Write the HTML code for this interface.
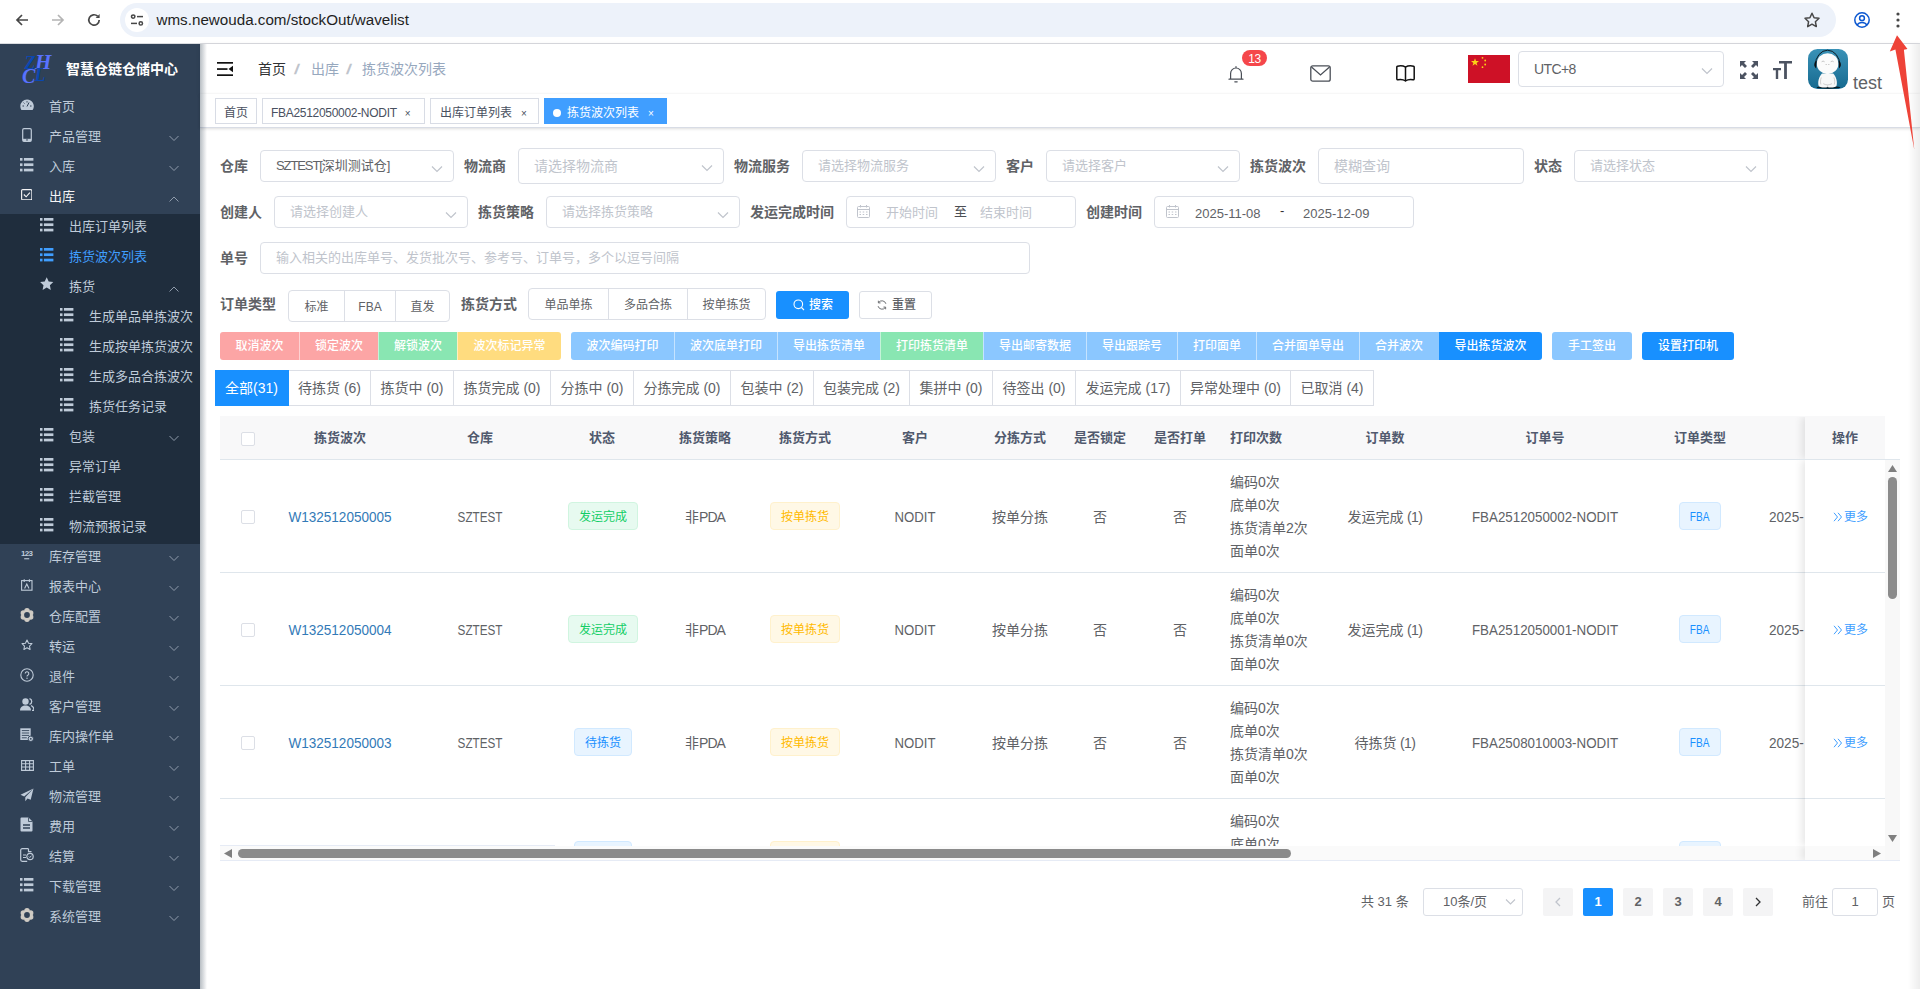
<!DOCTYPE html><html lang="zh-CN"><head><meta charset="utf-8"><title>拣货波次列表</title><style>
*{box-sizing:border-box;margin:0;padding:0}
html,body{width:1920px;height:989px;overflow:hidden;background:#fff}
body{font-family:"Liberation Sans","Noto Sans CJK SC",sans-serif;font-size:14px;color:#606266;position:relative}
.abs{position:absolute}
svg{display:block}
/* chrome */
#chrome{position:absolute;left:0;top:0;width:1920px;height:44px;background:#fff;border-bottom:1px solid #dadce0}
#pill{position:absolute;left:120px;top:3px;width:1716px;height:34px;border-radius:17px;background:#edf2fa}
#url{position:absolute;left:156.5px;top:10px;font-size:15.2px;color:#1f1f1f;letter-spacing:0px;line-height:20px;white-space:nowrap}
/* sidebar */
#side{position:absolute;left:0;top:44px;width:200px;height:945px;background:#304156;overflow:hidden}
#sub{position:absolute;left:0;top:170px;width:200px;height:330px;background:#1f2d3d}
.mi{position:absolute;left:0;width:200px;height:30px;line-height:30px;font-size:13px;color:#bfcbd9;white-space:nowrap}
.mi .t{position:absolute;top:0}
.mi svg{position:absolute}
.mi.act{color:#409eff}
.mi.open{color:#f4f4f5}
#title{position:absolute;left:66px;top:14px;font-size:14px;font-weight:bold;color:#fff;line-height:22px;white-space:nowrap}
/* navbar */
#nav{position:absolute;left:200px;top:44px;width:1720px;height:50px;background:#fff;box-shadow:0 1px 4px rgba(0,21,41,.13)}
.bc{position:absolute;top:15px;line-height:20px;font-size:14px;white-space:nowrap}
#tags{position:absolute;left:200px;top:94px;width:1720px;height:34px;background:#fff;border-bottom:1px solid #d8dce5;box-shadow:0 1px 3px 0 rgba(0,0,0,.12),0 0 3px 0 rgba(0,0,0,.04)}
.tag{position:absolute;top:4px;height:26px;line-height:28px;border:1px solid #d8dce5;color:#495060;background:#fff;font-size:12px;white-space:nowrap;padding:0 8px}
.tag.on{background:#409eff;border-color:#409eff;color:#fff}
.tag .x{display:inline-block;font-size:10px;margin-left:6px;transform:translateY(-0.5px)}
/* form */
.lb{position:absolute;font-size:14px;font-weight:bold;color:#606266;line-height:20px;white-space:nowrap}
.inp{position:absolute;border:1px solid #dcdfe6;border-radius:4px;background:#fff;font-size:13px;color:#606266;white-space:nowrap}
.inp .ph{position:absolute;left:15px;color:#c0c4cc}
.inp .v{position:absolute;left:15px;color:#606266}
.inp svg.arr{position:absolute}
.rg{position:absolute;border:1px solid #dcdfe6;border-radius:4px;font-size:12px;color:#606266;background:#fff}
.rg span{position:absolute;top:0;text-align:center;height:100%;border-left:1px solid #dcdfe6}
.rg span:first-child{border-left:0}
.btn{position:absolute;height:28px;line-height:28px;font-size:12px;font-weight:500;color:#fff;text-align:center;white-space:nowrap}
.tab{position:absolute;top:370px;height:36px;line-height:34px;font-size:14px;color:#606266;text-align:center;border:1px solid #dcdfe6;border-left:0;white-space:nowrap;background:#fff}
/* table */
.th{position:absolute;top:417px;height:42px;line-height:42px;font-size:13px;font-weight:bold;color:#515a6e;white-space:nowrap;transform:translateX(-50%)}
.td{position:absolute;font-size:14px;color:#606266;line-height:23px;white-space:nowrap;transform:translate(-50%,-50%)}
.tdl{position:absolute;font-size:14px;color:#606266;line-height:23px;white-space:nowrap}
.cb{position:absolute;width:14px;height:14px;border:1px solid #dcdfe6;border-radius:2px;background:#fff}
.tg{position:absolute;height:28px;line-height:28px;font-size:12px;border:1px solid;border-radius:4px;text-align:center;white-space:nowrap;transform:translate(-50%,-50%)}
.tg.g{color:#13ce66;background:#e7faf0;border-color:#d0f5e0}
.tg.y{color:#ffba00;background:#fff8e6;border-color:#fff1cc}
.tg.b{color:#1890ff;background:#e8f4ff;border-color:#d1e9ff}
.pg{position:absolute;top:888px;height:28px;line-height:28px;width:30px;text-align:center;background:#f4f4f5;border-radius:2px;font-size:13px;font-weight:bold;color:#606266}
</style></head><body><div id="chrome"><div id="pill"></div><svg class="abs" style="left:14px;top:12px" width="16" height="16" viewBox="0 0 16 16"><path d="M14 8H3M8 3L3 8l5 5" fill="none" stroke="#474747" stroke-width="1.7"/></svg><svg class="abs" style="left:50px;top:12px" width="16" height="16" viewBox="0 0 16 16"><path d="M2 8h11M8 3l5 5-5 5" fill="none" stroke="#b4b4b4" stroke-width="1.7"/></svg><svg class="abs" style="left:86px;top:12px" width="16" height="16" viewBox="0 0 16 16"><path d="M13.2 8A5.2 5.2 0 1 1 11.6 4.2" fill="none" stroke="#474747" stroke-width="1.7"/><path d="M13.6 2v4h-4z" fill="#474747"/></svg><div class="abs" style="left:125px;top:8px;width:24px;height:24px;border-radius:12px;background:#fff"></div><svg class="abs" style="left:130px;top:13px" width="14" height="14" viewBox="0 0 14 14"><g fill="none" stroke="#474747" stroke-width="1.5"><circle cx="3.2" cy="3.6" r="1.7"/><path d="M7 3.6h6"/><circle cx="10.8" cy="10.4" r="1.7"/><path d="M1 10.4h6"/></g></svg><div id="url">wms.newouda.com/stockOut/wavelist</div><svg class="abs" style="left:1803px;top:11px" width="18" height="18" viewBox="0 0 18 18"><path d="M9 2.2l2.1 4.5 4.9.6-3.6 3.4.9 4.9L9 13.2l-4.3 2.4.9-4.9L2 7.3l4.9-.6z" fill="none" stroke="#474747" stroke-width="1.5" stroke-linejoin="round"/></svg><svg class="abs" style="left:1853px;top:11px" width="18" height="18" viewBox="0 0 18 18"><g fill="none" stroke="#0b57d0" stroke-width="1.5"><circle cx="9" cy="9" r="7.2"/><circle cx="9" cy="7.2" r="2.4"/><path d="M4 14c1.2-1.8 3-2.6 5-2.6s3.800.8 5 2.600"/></g></svg><svg class="abs" style="left:1893.800px;top:11px" width="8" height="18" viewBox="0 0 8 18"><g fill="#474747"><circle cx="4" cy="3" r="1.6"/><circle cx="4" cy="9" r="1.6"/><circle cx="4" cy="15" r="1.6"/></g></svg></div><div id="side"><div id="sub"></div><svg class="abs" style="left:20px;top:8px" width="36" height="34" viewBox="0 0 36 34"><g font-family="Liberation Serif,serif" font-style="italic" font-weight="bold"><text x="4.500" y="16.800" font-size="18" fill="#0c47b0">Z</text><text x="15" y="17" font-size="21" fill="#5872ff">H</text><text x="2" y="31" font-size="20" fill="#5872ff">C</text><text x="14.500" y="29" font-size="18" fill="#0c47b0">L</text></g></svg><div id="title">智慧仓链仓储中心</div><div class="mi" style="top:48px"><svg style="left:20px;top:7px" width="14" height="12" viewBox="0 0 14 12"><path d="M7 .5A6.8 6.8 0 0 0 .3 7.300c0 1.400.4 2.700 1.100 3.800h11.200A6.800 6.800 0 0 0 7 .5z" fill="#bfcbd9"/><g stroke="#304156" stroke-width="1"><path d="M7 7.500l2-4M2.500 7h1.500M10 7h1.500M7 2.200v1.300M3.600 3.600l.9.900"/></g></svg><span class="t" style="left:49px">首页</span></div><div class="mi" style="top:78px"><svg style="left:21.500px;top:5.500px" width="10" height="14" viewBox="0 0 10 14"><rect x=".7" y=".7" width="8.600" height="12.600" rx="1.300" fill="none" stroke="#bfcbd9" stroke-width="1.200"/><rect x="1" y="10.800" width="8" height="2.300" fill="#bfcbd9"/><rect x="4" y="11.500" width="2" height=".9" fill="#304156"/></svg><span class="t" style="left:49px">产品管理</span><svg style="left:169px;top:12.5px" width="10" height="7" viewBox="0 0 10 7"><path d="M.5 1l4.500 4.500L9.500 1" fill="none" stroke="#8f9bab" stroke-width="1"/></svg></div><div class="mi" style="top:108px"><svg style="left:20px;top:6px" width="14" height="14" viewBox="0 0 14 14"><g fill="#bfcbd9"><rect x="0" y="0" width="2.500" height="2.700"/><rect x="3.900" y="0" width="9.500" height="2.700"/><rect x="0" y="5.350" width="2.500" height="2.700"/><rect x="3.900" y="5.350" width="9.500" height="2.700"/><rect x="0" y="10.700" width="2.500" height="2.700"/><rect x="3.900" y="10.700" width="9.500" height="2.700"/></g></svg><span class="t" style="left:49px">入库</span><svg style="left:169px;top:12.5px" width="10" height="7" viewBox="0 0 10 7"><path d="M.5 1l4.500 4.500L9.500 1" fill="none" stroke="#8f9bab" stroke-width="1"/></svg></div><div class="mi open" style="top:138px"><svg style="left:20.600px;top:6.800px" width="11.500" height="11.500" viewBox="0 0 13 13"><rect x=".7" y=".7" width="11.600" height="11.600" rx="1.200" fill="none" stroke="#f4f4f5" stroke-width="1.300"/><path d="M3.200 6.200l2.600 2.600 4.200-4.600" fill="none" stroke="#f4f4f5" stroke-width="1.300"/></svg><span class="t" style="left:49px">出库</span><svg style="left:169px;top:13.5px" width="10" height="7" viewBox="0 0 10 7"><path d="M.5 5.500l4.500-4.500 4.500 4.500" fill="none" stroke="#8f9bab" stroke-width="1"/></svg></div><div class="mi" style="top:168px"><svg style="left:40px;top:6px" width="14" height="14" viewBox="0 0 14 14"><g fill="#bfcbd9"><rect x="0" y="0" width="2.500" height="2.700"/><rect x="3.900" y="0" width="9.500" height="2.700"/><rect x="0" y="5.350" width="2.500" height="2.700"/><rect x="3.900" y="5.350" width="9.500" height="2.700"/><rect x="0" y="10.700" width="2.500" height="2.700"/><rect x="3.900" y="10.700" width="9.500" height="2.700"/></g></svg><span class="t" style="left:69px">出库订单列表</span></div><div class="mi act" style="top:198px"><svg style="left:40px;top:6px" width="14" height="14" viewBox="0 0 14 14"><g fill="#409eff"><rect x="0" y="0" width="2.500" height="2.700"/><rect x="3.900" y="0" width="9.500" height="2.700"/><rect x="0" y="5.350" width="2.500" height="2.700"/><rect x="3.900" y="5.350" width="9.500" height="2.700"/><rect x="0" y="10.700" width="2.500" height="2.700"/><rect x="3.900" y="10.700" width="9.500" height="2.700"/></g></svg><span class="t" style="left:69px">拣货波次列表</span></div><div class="mi" style="top:228px"><svg style="left:40px;top:5px" width="14" height="14" viewBox="0 0 14 14"><path d="M6.700 .3l2 4.200 4.600.6-3.400 3.200.9 4.600-4.100-2.300-4.100 2.300.9-4.600L.1 5.100l4.600-.6z" fill="#bfcbd9"/></svg><span class="t" style="left:69px">拣货</span><svg style="left:169px;top:13.5px" width="10" height="7" viewBox="0 0 10 7"><path d="M.5 5.500l4.500-4.500 4.500 4.500" fill="none" stroke="#8f9bab" stroke-width="1"/></svg></div><div class="mi" style="top:258px"><svg style="left:60px;top:6px" width="14" height="14" viewBox="0 0 14 14"><g fill="#bfcbd9"><rect x="0" y="0" width="2.500" height="2.700"/><rect x="3.900" y="0" width="9.500" height="2.700"/><rect x="0" y="5.350" width="2.500" height="2.700"/><rect x="3.900" y="5.350" width="9.500" height="2.700"/><rect x="0" y="10.700" width="2.500" height="2.700"/><rect x="3.900" y="10.700" width="9.500" height="2.700"/></g></svg><span class="t" style="left:89px">生成单品单拣波次</span></div><div class="mi" style="top:288px"><svg style="left:60px;top:6px" width="14" height="14" viewBox="0 0 14 14"><g fill="#bfcbd9"><rect x="0" y="0" width="2.500" height="2.700"/><rect x="3.900" y="0" width="9.500" height="2.700"/><rect x="0" y="5.350" width="2.500" height="2.700"/><rect x="3.900" y="5.350" width="9.500" height="2.700"/><rect x="0" y="10.700" width="2.500" height="2.700"/><rect x="3.900" y="10.700" width="9.500" height="2.700"/></g></svg><span class="t" style="left:89px">生成按单拣货波次</span></div><div class="mi" style="top:318px"><svg style="left:60px;top:6px" width="14" height="14" viewBox="0 0 14 14"><g fill="#bfcbd9"><rect x="0" y="0" width="2.500" height="2.700"/><rect x="3.900" y="0" width="9.500" height="2.700"/><rect x="0" y="5.350" width="2.500" height="2.700"/><rect x="3.900" y="5.350" width="9.500" height="2.700"/><rect x="0" y="10.700" width="2.500" height="2.700"/><rect x="3.900" y="10.700" width="9.500" height="2.700"/></g></svg><span class="t" style="left:89px">生成多品合拣波次</span></div><div class="mi" style="top:348px"><svg style="left:60px;top:6px" width="14" height="14" viewBox="0 0 14 14"><g fill="#bfcbd9"><rect x="0" y="0" width="2.500" height="2.700"/><rect x="3.900" y="0" width="9.500" height="2.700"/><rect x="0" y="5.350" width="2.500" height="2.700"/><rect x="3.900" y="5.350" width="9.500" height="2.700"/><rect x="0" y="10.700" width="2.500" height="2.700"/><rect x="3.900" y="10.700" width="9.500" height="2.700"/></g></svg><span class="t" style="left:89px">拣货任务记录</span></div><div class="mi" style="top:378px"><svg style="left:40px;top:6px" width="14" height="14" viewBox="0 0 14 14"><g fill="#bfcbd9"><rect x="0" y="0" width="2.500" height="2.700"/><rect x="3.900" y="0" width="9.500" height="2.700"/><rect x="0" y="5.350" width="2.500" height="2.700"/><rect x="3.900" y="5.350" width="9.500" height="2.700"/><rect x="0" y="10.700" width="2.500" height="2.700"/><rect x="3.900" y="10.700" width="9.500" height="2.700"/></g></svg><span class="t" style="left:69px">包装</span><svg style="left:169px;top:12.5px" width="10" height="7" viewBox="0 0 10 7"><path d="M.5 1l4.500 4.500L9.500 1" fill="none" stroke="#8f9bab" stroke-width="1"/></svg></div><div class="mi" style="top:408px"><svg style="left:40px;top:6px" width="14" height="14" viewBox="0 0 14 14"><g fill="#bfcbd9"><rect x="0" y="0" width="2.500" height="2.700"/><rect x="3.900" y="0" width="9.500" height="2.700"/><rect x="0" y="5.350" width="2.500" height="2.700"/><rect x="3.900" y="5.350" width="9.500" height="2.700"/><rect x="0" y="10.700" width="2.500" height="2.700"/><rect x="3.900" y="10.700" width="9.500" height="2.700"/></g></svg><span class="t" style="left:69px">异常订单</span></div><div class="mi" style="top:438px"><svg style="left:40px;top:6px" width="14" height="14" viewBox="0 0 14 14"><g fill="#bfcbd9"><rect x="0" y="0" width="2.500" height="2.700"/><rect x="3.900" y="0" width="9.500" height="2.700"/><rect x="0" y="5.350" width="2.500" height="2.700"/><rect x="3.900" y="5.350" width="9.500" height="2.700"/><rect x="0" y="10.700" width="2.500" height="2.700"/><rect x="3.900" y="10.700" width="9.500" height="2.700"/></g></svg><span class="t" style="left:69px">拦截管理</span></div><div class="mi" style="top:468px"><svg style="left:40px;top:6px" width="14" height="14" viewBox="0 0 14 14"><g fill="#bfcbd9"><rect x="0" y="0" width="2.500" height="2.700"/><rect x="3.900" y="0" width="9.500" height="2.700"/><rect x="0" y="5.350" width="2.500" height="2.700"/><rect x="3.900" y="5.350" width="9.500" height="2.700"/><rect x="0" y="10.700" width="2.500" height="2.700"/><rect x="3.900" y="10.700" width="9.500" height="2.700"/></g></svg><span class="t" style="left:69px">物流预报记录</span></div><div class="mi" style="top:498px"><svg style="left:20.500px;top:6px" width="13" height="13" viewBox="0 0 13 13"><text x="0" y="8" font-size="8" font-weight="bold" fill="#bfcbd9" font-family="Liberation Sans,sans-serif" letter-spacing="-0.700">123</text><path d="M3.200 10.200h5v1.100h-5z" fill="#bfcbd9"/></svg><span class="t" style="left:49px">库存管理</span><svg style="left:169px;top:12.5px" width="10" height="7" viewBox="0 0 10 7"><path d="M.5 1l4.500 4.500L9.500 1" fill="none" stroke="#8f9bab" stroke-width="1"/></svg></div><div class="mi" style="top:528px"><svg style="left:20.500px;top:6.500px" width="12" height="12" viewBox="0 0 12 12"><rect x=".6" y="1.600" width="10.400" height="9.600" fill="none" stroke="#bfcbd9" stroke-width="1.100"/><path d="M3.200 .2v2.800M8.400 .2v2.800M3.600 9.500l2.200-4.500 2.200 4.500" fill="none" stroke="#bfcbd9" stroke-width="1.100"/></svg><span class="t" style="left:49px">报表中心</span><svg style="left:169px;top:12.5px" width="10" height="7" viewBox="0 0 10 7"><path d="M.5 1l4.500 4.500L9.500 1" fill="none" stroke="#8f9bab" stroke-width="1"/></svg></div><div class="mi" style="top:558px"><svg style="left:20px;top:6px" width="14" height="14" viewBox="0 0 14 14"><g fill="#cfcbc4"><circle cx="7" cy="2.800" r="2.750"/><circle cx="10.650" cy="4.900" r="2.750"/><circle cx="10.650" cy="9.100" r="2.750"/><circle cx="7" cy="11.200" r="2.750"/><circle cx="3.350" cy="9.100" r="2.750"/><circle cx="3.350" cy="4.900" r="2.750"/><circle cx="7" cy="7" r="4"/></g><circle cx="7" cy="7" r="2.900" fill="#304156"/></svg><span class="t" style="left:49px">仓库配置</span><svg style="left:169px;top:12.5px" width="10" height="7" viewBox="0 0 10 7"><path d="M.5 1l4.500 4.500L9.500 1" fill="none" stroke="#8f9bab" stroke-width="1"/></svg></div><div class="mi" style="top:588px"><svg style="left:20.500px;top:7px" width="12" height="12" viewBox="0 0 14 14"><path d="M7 1.200l1.800 3.700 4 .5-2.900 2.800.7 4L7 10.300l-3.600 1.900.7-4L1.200 5.400l4-.5z" fill="none" stroke="#bfcbd9" stroke-width="1.250" stroke-linejoin="round"/></svg><span class="t" style="left:49px">转运</span><svg style="left:169px;top:12.5px" width="10" height="7" viewBox="0 0 10 7"><path d="M.5 1l4.500 4.500L9.500 1" fill="none" stroke="#8f9bab" stroke-width="1"/></svg></div><div class="mi" style="top:618px"><svg style="left:19.5px;top:5.8px" width="14" height="14" viewBox="0 0 14 14"><circle cx="7" cy="7" r="6.200" fill="none" stroke="#bfcbd9" stroke-width="1.100"/><path d="M5.200 5.600a1.800 1.800 0 1 1 2.600 1.600c-.6.300-.8.700-.8 1.300" fill="none" stroke="#bfcbd9" stroke-width="1.100"/><circle cx="7" cy="10.300" r=".7" fill="#bfcbd9"/></svg><span class="t" style="left:49px">退件</span><svg style="left:169px;top:12.5px" width="10" height="7" viewBox="0 0 10 7"><path d="M.5 1l4.500 4.500L9.500 1" fill="none" stroke="#8f9bab" stroke-width="1"/></svg></div><div class="mi" style="top:648px"><svg style="left:19.5px;top:5.5px" width="14" height="13" viewBox="0 0 14 13"><circle cx="5.500" cy="3.500" r="3.200" fill="#bfcbd9"/><path d="M0 12.500c0-3.500 2.500-5 5.500-5s5.500 1.500 5.500 5z" fill="#bfcbd9"/><path d="M9.500 .6a3 3 0 0 1 0 5.800M11 7.600c1.800.6 3 2 3 4.900h-2" fill="none" stroke="#bfcbd9" stroke-width="1.300"/></svg><span class="t" style="left:49px">客户管理</span><svg style="left:169px;top:12.5px" width="10" height="7" viewBox="0 0 10 7"><path d="M.5 1l4.500 4.500L9.500 1" fill="none" stroke="#8f9bab" stroke-width="1"/></svg></div><div class="mi" style="top:678px"><svg style="left:20px;top:5.500px" width="14" height="14" viewBox="0 0 14 14"><path d="M.3 .3h10.400v11.700H.3z" fill="#bfcbd9"/><path d="M1.800 2.600h7.400M1.800 5h7.400M1.800 7.400h7.400M1.800 9.800h5" stroke="#304156" stroke-width=".9"/><circle cx="10.800" cy="10.800" r="2.700" fill="#bfcbd9" stroke="#304156" stroke-width=".9"/><circle cx="10.800" cy="10.800" r=".9" fill="#304156"/></svg><span class="t" style="left:49px">库内操作单</span><svg style="left:169px;top:12.5px" width="10" height="7" viewBox="0 0 10 7"><path d="M.5 1l4.500 4.500L9.500 1" fill="none" stroke="#8f9bab" stroke-width="1"/></svg></div><div class="mi" style="top:708px"><svg style="left:20.5px;top:7.5px" width="13" height="11" viewBox="0 0 13 11"><path d="M.6 .6h11.800v9.800H.6zM.6 3.800h11.800M.6 7h11.800M4.600 .6v9.800M8.600 .6v9.800" fill="none" stroke="#bfcbd9" stroke-width="1.100"/></svg><span class="t" style="left:49px">工单</span><svg style="left:169px;top:12.5px" width="10" height="7" viewBox="0 0 10 7"><path d="M.5 1l4.500 4.500L9.500 1" fill="none" stroke="#8f9bab" stroke-width="1"/></svg></div><div class="mi" style="top:738px"><svg style="left:19.5px;top:5.5px" width="14" height="14" viewBox="0 0 14 14"><path d="M13.500 .5L.5 6.800l3.700 1.700zM13.500 .5L5.300 9.200v4l2.200-2.800 3.200 1.400z" fill="#bfcbd9"/></svg><span class="t" style="left:49px">物流管理</span><svg style="left:169px;top:12.5px" width="10" height="7" viewBox="0 0 10 7"><path d="M.5 1l4.500 4.500L9.500 1" fill="none" stroke="#8f9bab" stroke-width="1"/></svg></div><div class="mi" style="top:768px"><svg style="left:20px;top:5px" width="13" height="15" viewBox="0 0 13 15"><path d="M1.500 .5h7l4 4v9a1 1 0 0 1-1 1h-10a1 1 0 0 1-1-1v-12a1 1 0 0 1 1-1z" fill="#bfcbd9"/><path d="M3 8h7M3 11h7" stroke="#304156" stroke-width="1.400"/><path d="M8.500 .5v4h4" fill="none" stroke="#304156" stroke-width=".8"/></svg><span class="t" style="left:49px">费用</span><svg style="left:169px;top:12.5px" width="10" height="7" viewBox="0 0 10 7"><path d="M.5 1l4.500 4.500L9.500 1" fill="none" stroke="#8f9bab" stroke-width="1"/></svg></div><div class="mi" style="top:798px"><svg style="left:19.5px;top:5.5px" width="14" height="14" viewBox="0 0 14 14"><path d="M8.500 .7H2.200a1.500 1.500 0 0 0-1.500 1.500v9.600a1.500 1.500 0 0 0 1.500 1.500h5M8.500 .7v3h3" fill="none" stroke="#bfcbd9" stroke-width="1.200"/><path d="M3 7h3M3 9.500h3" stroke="#bfcbd9" stroke-width="1.100"/><circle cx="10" cy="8.500" r="3.200" fill="none" stroke="#bfcbd9" stroke-width="1.200"/><path d="M8.800 8.500l1 1 1.600-1.800" fill="none" stroke="#bfcbd9" stroke-width="1"/></svg><span class="t" style="left:49px">结算</span><svg style="left:169px;top:12.5px" width="10" height="7" viewBox="0 0 10 7"><path d="M.5 1l4.500 4.500L9.500 1" fill="none" stroke="#8f9bab" stroke-width="1"/></svg></div><div class="mi" style="top:828px"><svg style="left:20px;top:6px" width="14" height="14" viewBox="0 0 14 14"><g fill="#bfcbd9"><rect x="0" y="0" width="2.500" height="2.700"/><rect x="3.900" y="0" width="9.500" height="2.700"/><rect x="0" y="5.350" width="2.500" height="2.700"/><rect x="3.900" y="5.350" width="9.500" height="2.700"/><rect x="0" y="10.700" width="2.500" height="2.700"/><rect x="3.900" y="10.700" width="9.500" height="2.700"/></g></svg><span class="t" style="left:49px">下载管理</span><svg style="left:169px;top:12.5px" width="10" height="7" viewBox="0 0 10 7"><path d="M.5 1l4.500 4.500L9.500 1" fill="none" stroke="#8f9bab" stroke-width="1"/></svg></div><div class="mi" style="top:858px"><svg style="left:20px;top:6px" width="14" height="14" viewBox="0 0 14 14"><g fill="#cfcbc4"><circle cx="7" cy="2.800" r="2.750"/><circle cx="10.650" cy="4.900" r="2.750"/><circle cx="10.650" cy="9.100" r="2.750"/><circle cx="7" cy="11.200" r="2.750"/><circle cx="3.350" cy="9.100" r="2.750"/><circle cx="3.350" cy="4.900" r="2.750"/><circle cx="7" cy="7" r="4"/></g><circle cx="7" cy="7" r="2.900" fill="#304156"/></svg><span class="t" style="left:49px">系统管理</span><svg style="left:169px;top:12.5px" width="10" height="7" viewBox="0 0 10 7"><path d="M.5 1l4.500 4.500L9.500 1" fill="none" stroke="#8f9bab" stroke-width="1"/></svg></div></div><div class="abs" style="left:200px;top:44px;width:7px;height:945px;background:linear-gradient(90deg,rgba(0,21,41,.28),rgba(0,21,41,0));z-index:50"></div><div id="nav"><svg class="abs" style="left:17px;top:18px" width="16" height="14" viewBox="0 0 16 14"><g fill="#111"><rect x="0" y="0" width="16" height="1.700"/><rect x="0" y="6.200" width="10.500" height="1.700"/><rect x="0" y="12.300" width="16" height="1.700"/><path d="M16 3.800v6.500L11.500 7z"/></g></svg><span class="bc" style="left:58px;color:#303133">首页</span><span class="bc" style="left:95px;color:#c0c4cc;font-weight:bold;transform:skewX(-8deg) scaleX(1.3)">/</span><span class="bc" style="left:111px;color:#97a8be">出库</span><span class="bc" style="left:147px;color:#c0c4cc;font-weight:bold;transform:skewX(-8deg) scaleX(1.3)">/</span><span class="bc" style="left:162px;color:#97a8be">拣货波次列表</span><svg class="abs" style="left:1026px;top:20px" width="20" height="20" viewBox="0 0 20 20"><path d="M3 15.200h14M4.600 15.200V9.400a5.400 5.400 0 0 1 10.800 0v5.800M10 2.500v1.500M8.800 17.800h2.400" fill="none" stroke="#4a4f57" stroke-width="1.200" stroke-linecap="round"/></svg><div class="abs" style="left:1042px;top:6px;width:25px;height:16px;border-radius:8px;background:#f5474b;color:#fff;font-size:12px;line-height:19px;height:16px;overflow:hidden;text-align:center;letter-spacing:-.3px">13</div><svg class="abs" style="left:1110px;top:21px" width="21" height="17" viewBox="0 0 21 17"><rect x=".8" y=".8" width="19.400" height="15.400" rx="2" fill="none" stroke="#4a4f57" stroke-width="1.300"/><path d="M1.500 2l9 8 9-8" fill="none" stroke="#4a4f57" stroke-width="1.300"/></svg><svg class="abs" style="left:1196px;top:21px" width="19" height="17" viewBox="0 0 19 17"><path d="M9.500 2.200C7.500 .9 4 .7 1.500 1.200a1 1 0 0 0-.7 1v11.600a1 1 0 0 0 1.200 1c2.500-.4 5.500-.2 7.500 1.200 2-1.400 5-1.600 7.500-1.200a1 1 0 0 0 1.200-1V2.200a1 1 0 0 0-.7-1c-2.500-.5-6-.3-8 1zM9.500 2.200V16" fill="none" stroke="#111" stroke-width="1.500"/></svg><svg class="abs" style="left:1268px;top:11px" width="42" height="28" viewBox="0 0 42 28"><rect width="42" height="28" fill="#ce1126"/><g fill="#fcd116"><path d="M7 3.200l1 2.900h3l-2.400 1.800.9 2.900L7 9l-2.500 1.800.9-2.900L3 6.100h3z"/><circle cx="14.500" cy="2.800" r=".9"/><circle cx="17.200" cy="5.500" r=".9"/><circle cx="17.200" cy="9.500" r=".9"/><circle cx="14.500" cy="12.200" r=".9"/></g></svg><div class="inp" style="left:1318px;top:7px;width:206px;height:36px"><span class="v" style="top:7px;line-height:20px;font-size:14px;letter-spacing:-.6px">UTC+8</span><svg class="arr" style="left:182px;top:15px" width="12" height="8" viewBox="0 0 12 8"><path d="M1 1.500l5 5 5-5" fill="none" stroke="#c0c4cc" stroke-width="1.200"/></svg></div><svg class="abs" style="left:1540px;top:17px" width="18" height="18" viewBox="0 0 18 18"><g fill="#4c5361"><path d="M0 0h6L4 2l3 3-2 2-3-3-2 2zM18 0v6l-2-2-3 3-2-2 3-3-2-2zM0 18v-6l2 2 3-3 2 2-3 3 2 2zM18 18h-6l2-2-3-3 2-2 3 3 2-2z"/></g></svg><svg class="abs" style="left:1573px;top:17px" width="19" height="18" viewBox="0 0 19 18"><g fill="#4c5361"><path d="M6 0h13v2.600h-5.100V18h-2.800V2.600H6z"/><path d="M0 7h8v2.200H5.200V18H2.800V9.200H0z"/></g></svg><svg class="abs" style="left:1608px;top:5px" width="40" height="40" viewBox="0 0 40 40"><defs><linearGradient id="av" x1="0" y1="0" x2="0" y2="1"><stop offset="0" stop-color="#3a92b7"/><stop offset="1" stop-color="#166a90"/></linearGradient><clipPath id="avc"><rect width="40" height="40" rx="9.500"/></clipPath></defs><g clip-path="url(#avc)"><rect width="40" height="40" fill="url(#av)"/><ellipse cx="20.500" cy="38.400" rx="12" ry="1.300" fill="#061a24"/><path d="M14 24.500C11 27.500 9.300 33 10.800 37.300 13 38.900 18 38.900 19.600 38 21.200 38.900 26.200 38.900 28.400 37.300 29.900 33 28.200 27.500 25.200 24.500z" fill="#f8f8f8"/><path d="M13.300 28.500c-1 2.500-1 5-.4 7M25.900 28.500c1 2.500 1 5 .4 7M19.600 36.400v1.700M15.200 34.600c2.500 1.700 6.300 1.700 8.800 0" fill="none" stroke="#a9a9a9" stroke-width=".5"/><ellipse cx="19.600" cy="14.700" rx="10.800" ry="10.500" fill="#fbfbfb"/><path d="M7.300 16.500a12.300 15.300 0 0 1 24.600 0" fill="none" stroke="#0c0f12" stroke-width=".9"/><path d="M8.600 11.800c-2.600 .8-3.200 6-.4 7.600zM30.600 11.800c2.600 .8 3.200 6 .4 7.600z" fill="#0c0f12"/><path d="M13.600 12.800q1.500-1.500 3 0M22.700 12.800q1.500-1.500 3 0M17.600 15.500h1.200M20.200 15.500h1.200" fill="none" stroke="#8f8f8f" stroke-width=".5"/></g></svg><div class="abs" style="left:1653px;top:27px;font-size:18px;line-height:24px;color:#606266">test</div></div><div id="tags"><div class="tag" style="left:15px;width:42px;padding:0;text-align:center">首页</div><div class="tag" style="left:62px;width:163px;padding:0 0 0 8px"><span style="letter-spacing:-.3px">FBA2512050002-NODIT</span><span class="x" style="margin-left:8px">×</span></div><div class="tag" style="left:230px;width:109px;padding:0 0 0 9px">出库订单列表<span class="x" style="margin-left:9px">×</span></div><div class="tag on" style="left:344px;width:123px;padding:0 0 0 8px"><span style="display:inline-block;width:8px;height:8px;border-radius:4px;background:#fff;margin-right:6px;position:relative;top:0px"></span>拣货波次列表<span class="x" style="margin-left:9px">×</span></div></div><div class="lb" style="left:220px;top:156px">仓库</div><div class="inp" style="left:260px;top:150px;width:194px;height:32px"><span class="v" style="top:5px;line-height:20px;font-size:13px"><span style="letter-spacing:-1.1px">SZTEST[</span>深圳测试仓]</span><svg class="arr" style="right:10.5px;top:13.5px" width="12" height="8" viewBox="0 0 12 8"><path d="M1 1.500l5 5 5-5" fill="none" stroke="#c0c4cc" stroke-width="1.200"/></svg></div><div class="lb" style="left:464px;top:156px">物流商</div><div class="inp" style="left:518px;top:148px;width:206px;height:36px"><span class="ph" style="top:7px;line-height:20px;font-size:14px">请选择物流商</span><svg class="arr" style="right:10.5px;top:14.5px" width="12" height="8" viewBox="0 0 12 8"><path d="M1 1.500l5 5 5-5" fill="none" stroke="#c0c4cc" stroke-width="1.200"/></svg></div><div class="lb" style="left:734px;top:156px">物流服务</div><div class="inp" style="left:802px;top:150px;width:194px;height:32px"><span class="ph" style="top:5px;line-height:20px;font-size:13px">请选择物流服务</span><svg class="arr" style="right:10.5px;top:13.5px" width="12" height="8" viewBox="0 0 12 8"><path d="M1 1.500l5 5 5-5" fill="none" stroke="#c0c4cc" stroke-width="1.200"/></svg></div><div class="lb" style="left:1006px;top:156px">客户</div><div class="inp" style="left:1046px;top:150px;width:194px;height:32px"><span class="ph" style="top:5px;line-height:20px;font-size:13px">请选择客户</span><svg class="arr" style="right:10.5px;top:13.5px" width="12" height="8" viewBox="0 0 12 8"><path d="M1 1.500l5 5 5-5" fill="none" stroke="#c0c4cc" stroke-width="1.200"/></svg></div><div class="lb" style="left:1250px;top:156px">拣货波次</div><div class="inp" style="left:1318px;top:148px;width:206px;height:36px"><span class="ph" style="top:7px;line-height:20px;font-size:14px">模糊查询</span></div><div class="lb" style="left:1534px;top:156px">状态</div><div class="inp" style="left:1574px;top:150px;width:194px;height:32px"><span class="ph" style="top:5px;line-height:20px;font-size:13px">请选择状态</span><svg class="arr" style="right:10.5px;top:13.5px" width="12" height="8" viewBox="0 0 12 8"><path d="M1 1.500l5 5 5-5" fill="none" stroke="#c0c4cc" stroke-width="1.200"/></svg></div><div class="lb" style="left:220px;top:202px">创建人</div><div class="inp" style="left:274px;top:196px;width:194px;height:32px"><span class="ph" style="top:5px;line-height:20px;font-size:13px">请选择创建人</span><svg class="arr" style="right:10.5px;top:13.5px" width="12" height="8" viewBox="0 0 12 8"><path d="M1 1.500l5 5 5-5" fill="none" stroke="#c0c4cc" stroke-width="1.200"/></svg></div><div class="lb" style="left:478px;top:202px">拣货策略</div><div class="inp" style="left:546px;top:196px;width:194px;height:32px"><span class="ph" style="top:5px;line-height:20px;font-size:13px">请选择拣货策略</span><svg class="arr" style="right:10.5px;top:13.5px" width="12" height="8" viewBox="0 0 12 8"><path d="M1 1.500l5 5 5-5" fill="none" stroke="#c0c4cc" stroke-width="1.200"/></svg></div><div class="lb" style="left:750px;top:202px">发运完成时间</div><div class="inp" style="left:846px;top:196px;width:230px;height:32px"><svg class="abs" style="left:10px;top:8px" width="13" height="13" viewBox="0 0 13 13"><g fill="none" stroke="#c0c4cc" stroke-width="1"><rect x=".5" y="1.500" width="12" height="11" rx="1"/><path d="M.5 4.500h12M3.500 0v2.500M9.500 0v2.500"/></g><g fill="#c0c4cc"><rect x="2.500" y="6.500" width="1.500" height="1"/><rect x="5.700" y="6.500" width="1.500" height="1"/><rect x="9" y="6.500" width="1.500" height="1"/><rect x="2.500" y="9" width="1.500" height="1"/><rect x="5.700" y="9" width="1.500" height="1"/><rect x="9" y="9" width="1.500" height="1"/></g></svg><span class="ph" style="left:39px;top:6px;line-height:20px">开始时间</span><span style="position:absolute;left:107px;top:5px;line-height:20px;font-size:13px;color:#4d4f54">至</span><span class="ph" style="left:133px;top:6px;line-height:20px">结束时间</span></div><div class="lb" style="left:1086px;top:202px">创建时间</div><div class="inp" style="left:1154px;top:196px;width:260px;height:32px"><svg class="abs" style="left:11px;top:8px" width="13" height="13" viewBox="0 0 13 13"><g fill="none" stroke="#c0c4cc" stroke-width="1"><rect x=".5" y="1.500" width="12" height="11" rx="1"/><path d="M.5 4.500h12M3.500 0v2.500M9.500 0v2.500"/></g><g fill="#c0c4cc"><rect x="2.500" y="6.500" width="1.500" height="1"/><rect x="5.700" y="6.500" width="1.500" height="1"/><rect x="9" y="6.500" width="1.500" height="1"/><rect x="2.500" y="9" width="1.500" height="1"/><rect x="5.700" y="9" width="1.500" height="1"/><rect x="9" y="9" width="1.500" height="1"/></g></svg><span class="v" style="left:40px;top:7px;line-height:20px">2025-11-08</span><span style="position:absolute;left:125px;top:4px;line-height:20px;font-size:13px;color:#303133">-</span><span class="v" style="left:148px;top:7px;line-height:20px">2025-12-09</span></div><div class="lb" style="left:220px;top:248px">单号</div><div class="inp" style="left:260px;top:242px;width:770px;height:32px"><span class="ph" style="top:5px;line-height:20px;font-size:13px">输入相关的出库单号、发货批次号、参考号、订单号，多个以逗号间隔</span></div><div class="lb" style="left:220px;top:294px">订单类型</div><div class="rg" style="left:288px;top:290px;width:162px;height:32px;line-height:32px"><span style="left:0;width:55px">标准</span><span style="left:55px;width:51px">FBA</span><span style="left:106px;width:54px">直发</span></div><div class="lb" style="left:461px;top:294px">拣货方式</div><div class="rg" style="left:528px;top:288px;width:238px;height:32px;line-height:32px;color:#606266"><span style="left:0;width:79px">单品单拣</span><span style="left:79px;width:79px">多品合拣</span><span style="left:158px;width:78px">按单拣货</span></div><div class="btn" style="left:776px;top:291px;width:73px;background:#1890ff;border-radius:3px"><svg class="abs" style="left:17px;top:8px" width="12" height="12" viewBox="0 0 12 12"><circle cx="5.300" cy="5.300" r="4.300" fill="none" stroke="#fff" stroke-width="1.100"/><path d="M8.500 8.500l2.500 2.500" stroke="#fff" stroke-width="1.100"/></svg><span style="position:absolute;left:33px;font-weight:500">搜索</span></div><div class="btn" style="left:859px;top:291px;width:73px;background:#fff;border:1px solid #dcdfe6;border-radius:3px;color:#606266;line-height:26px"><svg class="abs" style="left:17px;top:8px" width="10" height="10" viewBox="0 0 11 11"><path d="M9.800 4.200A4.500 4.500 0 0 0 2 2.500M1.200 6.800A4.500 4.500 0 0 0 9 8.500" fill="none" stroke="#606266" stroke-width="1"/><path d="M1.500 .8v2.400h2.400M9.500 10.200V7.800H7.100" fill="none" stroke="#606266" stroke-width="1"/></svg><span style="position:absolute;left:32px;font-weight:500">重置</span></div><div class="btn" style="left:220px;top:332px;width:79px;background:#fca5a5;border-radius:3px 0 0 3px;">取消波次</div><div class="btn" style="left:299px;top:332px;width:79px;background:#fca5a5;border-radius:0;border-left:1px solid rgba(255,255,255,.5);">锁定波次</div><div class="btn" style="left:378px;top:332px;width:79px;background:#89e6b2;border-radius:0;border-left:1px solid rgba(255,255,255,.5);">解锁波次</div><div class="btn" style="left:457px;top:332px;width:104px;background:#ffdc7f;border-radius:0 3px 3px 0;border-left:1px solid rgba(255,255,255,.5);">波次标记异常</div><div class="btn" style="left:571px;top:332px;width:103px;background:#8bc7ff;border-radius:3px 0 0 3px;">波次编码打印</div><div class="btn" style="left:674px;top:332px;width:103px;background:#8bc7ff;border-radius:0;border-left:1px solid rgba(255,255,255,.5);">波次底单打印</div><div class="btn" style="left:777px;top:332px;width:103px;background:#8bc7ff;border-radius:0;border-left:1px solid rgba(255,255,255,.5);">导出拣货清单</div><div class="btn" style="left:880px;top:332px;width:103px;background:#89e6b2;border-radius:0;border-left:1px solid rgba(255,255,255,.5);">打印拣货清单</div><div class="btn" style="left:983px;top:332px;width:103px;background:#8bc7ff;border-radius:0;border-left:1px solid rgba(255,255,255,.5);">导出邮寄数据</div><div class="btn" style="left:1086px;top:332px;width:91px;background:#8bc7ff;border-radius:0;border-left:1px solid rgba(255,255,255,.5);">导出跟踪号</div><div class="btn" style="left:1177px;top:332px;width:79px;background:#8bc7ff;border-radius:0;border-left:1px solid rgba(255,255,255,.5);">打印面单</div><div class="btn" style="left:1256px;top:332px;width:103px;background:#8bc7ff;border-radius:0;border-left:1px solid rgba(255,255,255,.5);">合并面单导出</div><div class="btn" style="left:1359px;top:332px;width:79px;background:#8bc7ff;border-radius:0;border-left:1px solid rgba(255,255,255,.5);">合并波次</div><div class="btn" style="left:1438px;top:332px;width:104px;background:#1890ff;border-radius:0 3px 3px 0;border-left:1px solid rgba(255,255,255,.5);">导出拣货波次</div><div class="btn" style="left:1552px;top:332px;width:80px;background:#8bc7ff;border-radius:3px;">手工签出</div><div class="btn" style="left:1642px;top:332px;width:92px;background:#1890ff;border-radius:3px;">设置打印机</div><div class="tab" style="left:215px;width:74px;background:#1890ff;border-color:#1890ff;color:#fff">全部(31)</div><div class="tab" style="left:289px;width:82px">待拣货 (6)</div><div class="tab" style="left:371px;width:83px">拣货中 (0)</div><div class="tab" style="left:454px;width:97px">拣货完成 (0)</div><div class="tab" style="left:551px;width:83px">分拣中 (0)</div><div class="tab" style="left:634px;width:97px">分拣完成 (0)</div><div class="tab" style="left:731px;width:83px">包装中 (2)</div><div class="tab" style="left:814px;width:96px">包装完成 (2)</div><div class="tab" style="left:910px;width:83px">集拼中 (0)</div><div class="tab" style="left:993px;width:83px">待签出 (0)</div><div class="tab" style="left:1076px;width:105px">发运完成 (17)</div><div class="tab" style="left:1181px;width:110px">异常处理中 (0)</div><div class="tab" style="left:1291px;width:83px">已取消 (4)</div><div class="abs" style="left:220px;top:416px;width:1665px;height:43px;background:#f8f8f9"></div><div class="abs" style="left:220px;top:459px;width:1680px;height:1px;background:#dfe6ec"></div><div class="cb" style="left:241px;top:432px"></div><div class="th" style="left:340px">拣货波次</div><div class="th" style="left:480px">仓库</div><div class="th" style="left:602px">状态</div><div class="th" style="left:705px">拣货策略</div><div class="th" style="left:805px">拣货方式</div><div class="th" style="left:915px">客户</div><div class="th" style="left:1020px">分拣方式</div><div class="th" style="left:1100px">是否锁定</div><div class="th" style="left:1180px">是否打单</div><div class="th" style="left:1385px">订单数</div><div class="th" style="left:1545px">订单号</div><div class="th" style="left:1700px">订单类型</div><div class="th" style="left:1230px;transform:none">打印次数</div><div class="abs" style="left:220px;top:460px;width:1665px;height:386px;overflow:hidden"><div class="cb" style="left:21px;top:50px"></div><div class="td" style="left:120px;top:57px;color:#337ab7;transform:translate(-50%,-50%) scaleX(.968)">W132512050005</div><div class="td" style="left:260px;top:57px;transform:translate(-50%,-50%) scaleX(.835)">SZTEST</div><div class="tg g" style="left:383px;top:56px;width:70px">发运完成</div><div class="td" style="left:485px;top:57px">非<span style="letter-spacing:-.9px">PDA</span></div><div class="tg y" style="left:585px;top:56px;width:70px">按单拣货</div><div class="td" style="left:695px;top:57px;transform:translate(-50%,-50%) scaleX(.94)">NODIT</div><div class="td" style="left:800px;top:57px">按单分拣</div><div class="td" style="left:880px;top:57px">否</div><div class="td" style="left:960px;top:57px">否</div><div class="tdl" style="left:1010px;top:11px">编码0次<br>底单0次<br>拣货清单2次<br>面单0次</div><div class="td" style="left:1165px;top:57px">发运完成<span style="letter-spacing:-.5px"> (1)</span></div><div class="td" style="left:1325px;top:57px;transform:translate(-50%,-50%) scaleX(.953)">FBA2512050002-NODIT</div><div class="tg b" style="left:1480px;top:56px;width:42px"><span style="display:inline-block;transform:scaleX(.84)">FBA</span></div><div class="tdl" style="left:1549px;top:45.5px;transform:scaleX(.97);transform-origin:left">2025-</div><div class="abs" style="left:0;top:112px;width:1665px;height:1px;background:#dfe6ec"></div><div class="cb" style="left:21px;top:163px"></div><div class="td" style="left:120px;top:170px;color:#337ab7;transform:translate(-50%,-50%) scaleX(.968)">W132512050004</div><div class="td" style="left:260px;top:170px;transform:translate(-50%,-50%) scaleX(.835)">SZTEST</div><div class="tg g" style="left:383px;top:169px;width:70px">发运完成</div><div class="td" style="left:485px;top:170px">非<span style="letter-spacing:-.9px">PDA</span></div><div class="tg y" style="left:585px;top:169px;width:70px">按单拣货</div><div class="td" style="left:695px;top:170px;transform:translate(-50%,-50%) scaleX(.94)">NODIT</div><div class="td" style="left:800px;top:170px">按单分拣</div><div class="td" style="left:880px;top:170px">否</div><div class="td" style="left:960px;top:170px">否</div><div class="tdl" style="left:1010px;top:124px">编码0次<br>底单0次<br>拣货清单0次<br>面单0次</div><div class="td" style="left:1165px;top:170px">发运完成<span style="letter-spacing:-.5px"> (1)</span></div><div class="td" style="left:1325px;top:170px;transform:translate(-50%,-50%) scaleX(.953)">FBA2512050001-NODIT</div><div class="tg b" style="left:1480px;top:169px;width:42px"><span style="display:inline-block;transform:scaleX(.84)">FBA</span></div><div class="tdl" style="left:1549px;top:158.5px;transform:scaleX(.97);transform-origin:left">2025-</div><div class="abs" style="left:0;top:225px;width:1665px;height:1px;background:#dfe6ec"></div><div class="cb" style="left:21px;top:276px"></div><div class="td" style="left:120px;top:283px;color:#337ab7;transform:translate(-50%,-50%) scaleX(.968)">W132512050003</div><div class="td" style="left:260px;top:283px;transform:translate(-50%,-50%) scaleX(.835)">SZTEST</div><div class="tg b" style="left:383px;top:282px;width:58px">待拣货</div><div class="td" style="left:485px;top:283px">非<span style="letter-spacing:-.9px">PDA</span></div><div class="tg y" style="left:585px;top:282px;width:70px">按单拣货</div><div class="td" style="left:695px;top:283px;transform:translate(-50%,-50%) scaleX(.94)">NODIT</div><div class="td" style="left:800px;top:283px">按单分拣</div><div class="td" style="left:880px;top:283px">否</div><div class="td" style="left:960px;top:283px">否</div><div class="tdl" style="left:1010px;top:237px">编码0次<br>底单0次<br>拣货清单0次<br>面单0次</div><div class="td" style="left:1165px;top:283px">待拣货<span style="letter-spacing:-.5px"> (1)</span></div><div class="td" style="left:1325px;top:283px;transform:translate(-50%,-50%) scaleX(.953)">FBA2508010003-NODIT</div><div class="tg b" style="left:1480px;top:282px;width:42px"><span style="display:inline-block;transform:scaleX(.84)">FBA</span></div><div class="tdl" style="left:1549px;top:271.5px;transform:scaleX(.97);transform-origin:left">2025-</div><div class="abs" style="left:0;top:338px;width:1665px;height:1px;background:#dfe6ec"></div><div class="cb" style="left:21px;top:389px"></div><div class="td" style="left:120px;top:396px;color:#337ab7;transform:translate(-50%,-50%) scaleX(.968)">W132512050002</div><div class="td" style="left:260px;top:396px;transform:translate(-50%,-50%) scaleX(.835)">SZTEST</div><div class="tg b" style="left:383px;top:395px;width:58px">待拣货</div><div class="td" style="left:485px;top:396px">非<span style="letter-spacing:-.9px">PDA</span></div><div class="tg y" style="left:585px;top:395px;width:70px">按单拣货</div><div class="td" style="left:695px;top:396px;transform:translate(-50%,-50%) scaleX(.94)">NODIT</div><div class="td" style="left:800px;top:396px">按单分拣</div><div class="td" style="left:880px;top:396px">否</div><div class="td" style="left:960px;top:396px">否</div><div class="tdl" style="left:1010px;top:350px">编码0次<br>底单0次<br>拣货清单0次<br>面单0次</div><div class="td" style="left:1165px;top:396px">待拣货<span style="letter-spacing:-.5px"> (1)</span></div><div class="td" style="left:1325px;top:396px;transform:translate(-50%,-50%) scaleX(.953)">FBA2508010002-NODIT</div><div class="tg b" style="left:1480px;top:395px;width:42px"><span style="display:inline-block;transform:scaleX(.84)">FBA</span></div><div class="tdl" style="left:1549px;top:384.5px;transform:scaleX(.97);transform-origin:left">2025-</div><div class="abs" style="left:0;top:451px;width:1665px;height:1px;background:#dfe6ec"></div><div class="abs" style="left:1585px;top:0;width:80px;height:386px;background:#fff;box-shadow:-3px 0 8px rgba(0,0,0,.10)"></div><div class="abs" style="left:1613px;top:48px;font-size:12px;line-height:18px;color:#409eff;white-space:nowrap"><svg style="position:absolute;left:0;top:4px" width="10" height="10" viewBox="0 0 10 10"><path d="M1 .8l3.500 4.200L1 9.200M5 .8l3.500 4.200L5 9.200" fill="none" stroke="#409eff" stroke-width="1"/></svg><span style="margin-left:11px">更多</span></div><div class="abs" style="left:1585px;top:112px;width:80px;height:1px;background:#dfe6ec"></div><div class="abs" style="left:1613px;top:161px;font-size:12px;line-height:18px;color:#409eff;white-space:nowrap"><svg style="position:absolute;left:0;top:4px" width="10" height="10" viewBox="0 0 10 10"><path d="M1 .8l3.500 4.200L1 9.200M5 .8l3.500 4.200L5 9.200" fill="none" stroke="#409eff" stroke-width="1"/></svg><span style="margin-left:11px">更多</span></div><div class="abs" style="left:1585px;top:225px;width:80px;height:1px;background:#dfe6ec"></div><div class="abs" style="left:1613px;top:274px;font-size:12px;line-height:18px;color:#409eff;white-space:nowrap"><svg style="position:absolute;left:0;top:4px" width="10" height="10" viewBox="0 0 10 10"><path d="M1 .8l3.500 4.200L1 9.200M5 .8l3.500 4.200L5 9.200" fill="none" stroke="#409eff" stroke-width="1"/></svg><span style="margin-left:11px">更多</span></div><div class="abs" style="left:1585px;top:338px;width:80px;height:1px;background:#dfe6ec"></div></div><div class="abs" style="left:1805px;top:417px;width:80px;height:42px;background:#f8f8f9;box-shadow:-3px 0 8px rgba(0,0,0,.10);clip-path:inset(0 0 0 -12px)"></div><div class="th" style="left:1845px">操作</div><div class="abs" style="left:220px;top:846px;width:1665px;height:14px;background:#fafafa"></div><div class="abs" style="left:220px;top:845px;width:335px;height:1px;background:#e6ebf5"></div><div class="abs" style="left:238px;top:849px;width:1053px;height:9px;border-radius:4.500px;background:#8b8b8b"></div><svg class="abs" style="left:224px;top:849px" width="8" height="9" viewBox="0 0 8 9"><path d="M0 4.500L8 0v9z" fill="#7f7f7f"/></svg><svg class="abs" style="left:1873px;top:849px" width="8" height="9" viewBox="0 0 8 9"><path d="M8 4.500L0 0v9z" fill="#7f7f7f"/></svg><div class="abs" style="left:220px;top:860px;width:1680px;height:1px;background:#e6ebf5"></div><div class="abs" style="left:1805px;top:846px;width:80px;height:14px;background:#fafafa;box-shadow:-3px 0 8px rgba(0,0,0,.10);clip-path:inset(0 0 0 -12px)"></div><svg class="abs" style="left:1873px;top:849px" width="8" height="9" viewBox="0 0 8 9"><path d="M8 4.500L0 0v9z" fill="#7f7f7f"/></svg><div class="abs" style="left:1885px;top:460px;width:15px;height:400px;background:#f8f8f8"></div><div class="abs" style="left:1888px;top:477px;width:9px;height:122px;border-radius:4.500px;background:#8b8b8b"></div><svg class="abs" style="left:1888px;top:465px" width="9" height="7" viewBox="0 0 9 7"><path d="M4.500 0L9 7H0z" fill="#7f7f7f"/></svg><svg class="abs" style="left:1888px;top:835px" width="9" height="7" viewBox="0 0 9 7"><path d="M4.500 7L9 0H0z" fill="#7f7f7f"/></svg><div class="abs" style="left:1361px;top:888px;line-height:28px;font-size:13px;color:#606266;white-space:nowrap">共 31 条</div><div class="inp" style="left:1423px;top:888px;width:100px;height:28px;border-radius:3px"><span class="v" style="left:19px;top:3px;line-height:20px">10条/页</span><svg class="arr" style="left:81px;top:9px" width="11" height="8" viewBox="0 0 11 8"><path d="M1 1.500l4.500 4.500L10 1.500" fill="none" stroke="#c0c4cc" stroke-width="1.100"/></svg></div><div class="pg" style="left:1543px"><svg class="abs" style="left:11px;top:9px" width="8" height="10" viewBox="0 0 8 10"><path d="M6 1L2 5l4 4" fill="none" stroke="#c0c4cc" stroke-width="1.300"/></svg></div><div class="pg" style="left:1583px;background:#1890ff;color:#fff">1</div><div class="pg" style="left:1623px">2</div><div class="pg" style="left:1663px">3</div><div class="pg" style="left:1703px">4</div><div class="pg" style="left:1743px"><svg class="abs" style="left:11px;top:9px" width="8" height="10" viewBox="0 0 8 10"><path d="M2 1l4 4-4 4" fill="none" stroke="#303133" stroke-width="1.300"/></svg></div><div class="abs" style="left:1802px;top:888px;line-height:28px;font-size:13px;color:#606266">前往</div><div class="inp" style="left:1832px;top:888px;width:46px;height:28px;border-radius:3px;text-align:center;line-height:26px;color:#606266">1</div><div class="abs" style="left:1882px;top:888px;line-height:28px;font-size:13px;color:#606266">页</div><svg class="abs" style="left:1880px;top:30px;z-index:99" width="40" height="130" viewBox="1880 30 40 130"><path d="M1897 35.300L1889.800 51.400L1895.400 49.600L1914.300 149.800L1903.900 49.800L1907.500 49z" fill="#ee4338"/></svg><div class="abs" style="left:1908px;top:44px;width:12px;height:945px;background:linear-gradient(90deg,rgba(0,0,0,0),rgba(0,0,0,.07));z-index:5"></div></body></html>
